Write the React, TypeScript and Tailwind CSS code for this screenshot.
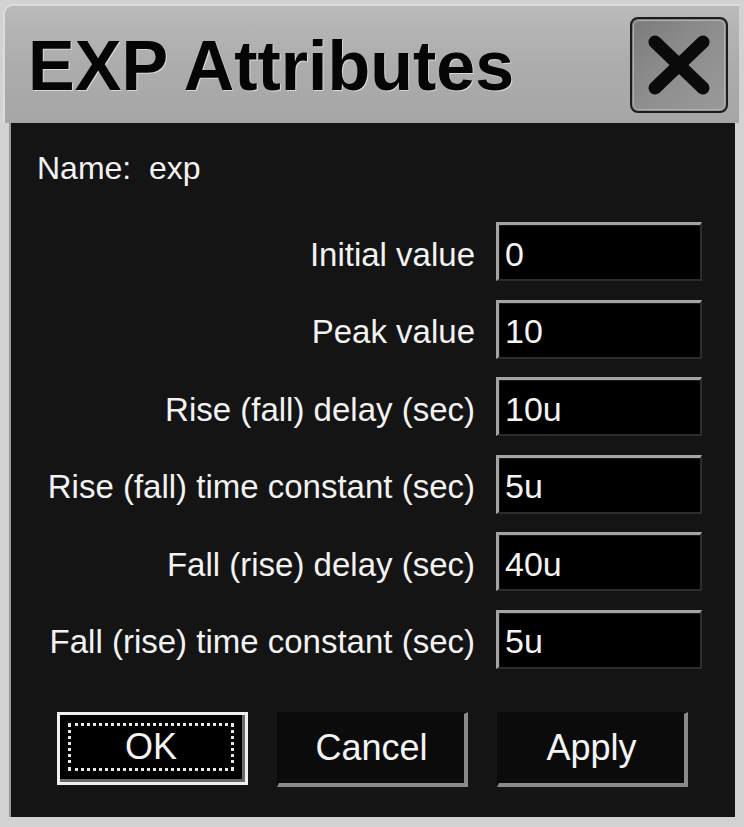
import React from "react";

const rows = [
  { label: "Initial value", value: "0" },
  { label: "Peak value", value: "10" },
  { label: "Rise (fall) delay (sec)", value: "10u" },
  { label: "Rise (fall) time constant (sec)", value: "5u" },
  { label: "Fall (rise) delay (sec)", value: "40u" },
  { label: "Fall (rise) time constant (sec)", value: "5u" },
];

const font = { fontFamily: '"Liberation Sans", Arial, sans-serif' };

function CloseButton() {
  return (
    <div className="w-[98px] h-[96px] rounded-[8px] border-2 border-[#1c1c1c] bg-gradient-to-br from-[#7c7c7c] via-[#8e8e8e] to-[#9a9a9a] p-[1px]">
      <div className="w-full h-full rounded-[6px] border border-[#b0b0b0] flex items-center justify-center">
        <svg width="64" height="60" viewBox="0 0 64 60">
          <line x1="8" y1="7" x2="56" y2="53" stroke="#0a0a0a" strokeWidth="13" strokeLinecap="round" />
          <line x1="56" y1="7" x2="8" y2="53" stroke="#0a0a0a" strokeWidth="13" strokeLinecap="round" />
        </svg>
      </div>
    </div>
  );
}

function Field({ label, value }: { label: string; value: string }) {
  return (
    <div className="flex items-center h-[59px]">
      <div className="w-[464px] text-right text-[33px] leading-[40px] text-[#f2f2f2] pt-[6px] whitespace-nowrap">
        {label}
      </div>
      <div className="ml-[21px] w-[206px] h-[59px] border-t-[3px] border-l-[3px] border-t-[#a4a4a4] border-l-[#a4a4a4] border-b-[2px] border-r-[2px] border-b-[#2c2c2c] border-r-[#2c2c2c] bg-black">
        <div className="h-full border-t border-l border-[#1a1a1a] pl-[5px] flex items-center text-[34px] leading-none text-[#f4f4f4] pt-[2px]">
          {value}
        </div>
      </div>
    </div>
  );
}

function DialogButton({ children, focused }: { children: React.ReactNode; focused?: boolean }) {
  if (focused) {
    return (
      <div className="w-[191px] h-[73px] border-[3px] border-[#f0f0f0] bg-black">
        <div className="h-full border-r-[3px] border-b-[3px] border-[#6a6a6a] p-[8px]">
          <div className="h-full border-[3px] border-dotted border-[#e8e8e8] flex items-center justify-center text-[36px] text-[#f4f4f4] leading-none">
            {children}
          </div>
        </div>
      </div>
    );
  }
  return (
    <div className="w-[191px] h-[75px] border-t-[2px] border-l-[2px] border-[#0a0a0a] border-r-[4px] border-b-[4px] border-r-[#8a8a8a] border-b-[#8a8a8a] bg-[#0b0b0b] flex items-center justify-center text-[36px] text-[#f4f4f4] leading-none">
      {children}
    </div>
  );
}

export default function App() {
  return (
    <div className="w-[744px] h-[827px] bg-[#d2d2d2] flex flex-col overflow-hidden" style={font}>
      {/* title bar */}
      <div className="h-[119px] mt-[4px] ml-[3px] mr-[5px] rounded-tl-[10px] border-t-2 border-l-2 border-[#dcdcdc] bg-gradient-to-b from-[#bababa] via-[#acacac] to-[#a6a6a6] flex items-start">
        <div className="pl-[23px] pt-[20px] text-[70px] leading-[80px] font-bold text-[#050505] [text-shadow:1px_1px_0_#d8d8d8]">
          EXP Attributes
        </div>
        <div className="ml-auto mr-[11px] mt-[11px]">
          <CloseButton />
        </div>
      </div>

      {/* body */}
      <div className="mx-[9px] h-[694px] bg-[#141414] border-l-[2px] border-[#9a9a9a] flex flex-col">
        <div className="pl-[26px] pt-[27px] text-[32px] leading-[36px] text-[#f2f2f2] whitespace-pre">
          {"Name:  exp"}
        </div>
        <div className="mt-[36px] flex flex-col gap-[18.5px]">
          {rows.map((r) => (
            <Field key={r.label} label={r.label} value={r.value} />
          ))}
        </div>
        <div className="mt-[43px] pl-[46px] flex gap-[29px]">
          <DialogButton focused>OK</DialogButton>
          <DialogButton>Cancel</DialogButton>
          <DialogButton>Apply</DialogButton>
        </div>
      </div>
    </div>
  );
}
